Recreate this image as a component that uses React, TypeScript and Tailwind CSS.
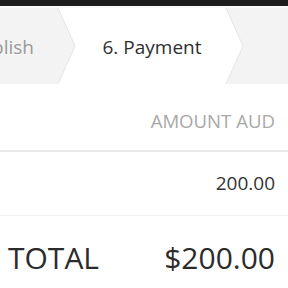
import React from 'react';

const font = { fontFamily: '"Open Sans", "Noto Sans", sans-serif' };

function Chevron({ fill, back }: { fill: string; back: string }) {
    return (
        <svg width="18" height="76" viewBox="0 0 18 76" className="block shrink-0">
            <rect width="18" height="76" fill={back} />
            <polygon points="0,0 1,0 18,38 1,76 0,76" fill={fill} />
            <polyline points="1,0 18,38 1,76" fill="none" stroke="#e4e4e4" strokeWidth="1" />
        </svg>
    );
}

export default function App() {
    return (
        <div className="w-[288px] h-[288px] bg-white overflow-hidden" style={font}>
            <div className="h-[6px] bg-[#1c1c1c]" />
            <div className="h-[2px] bg-[#fafafa]" />
            {/* Steps */}
            <div className="flex h-[76px]">
                <div className="w-[57px] shrink-0 bg-[#f3f3f3] flex items-center justify-end overflow-hidden">
                    <span className="text-[19px] text-[#9a9a9a] whitespace-nowrap pr-[23px] pt-[2px]">Publish</span>
                </div>
                <Chevron fill="#f3f3f3" back="#ffffff" />
                <div className="w-[150px] shrink-0 bg-white flex items-center justify-center">
                    <span className="text-[19px] text-[#2e2e2e] whitespace-nowrap ml-[4px] pt-[2px]">6. Payment</span>
                </div>
                <Chevron fill="#ffffff" back="#f3f3f3" />
                <div className="flex-1 bg-[#f3f3f3]" />
            </div>

            {/* Table */}
            <div className="h-[66px] flex items-center justify-end pr-[13px] pt-[8px]">
                <span className="text-[18.6px] text-[#a8a8a8]">AMOUNT AUD</span>
            </div>
            <div className="h-[2px] bg-[#e8e8e8]" />
            <div className="h-[63px] flex items-center justify-end pr-[13px]">
                <span className="text-[19px] text-[#333]">200.00</span>
            </div>
            <div className="h-px bg-[#efefef]" />
            <div className="h-[72px] flex items-center justify-between pl-[8px] pr-[13px] pt-[10px]">
                <span className="text-[30px] text-[#2b2b2b]">TOTAL</span>
                <span className="text-[30px] text-[#2b2b2b]">$200.00</span>
            </div>
        </div>
    );
}
